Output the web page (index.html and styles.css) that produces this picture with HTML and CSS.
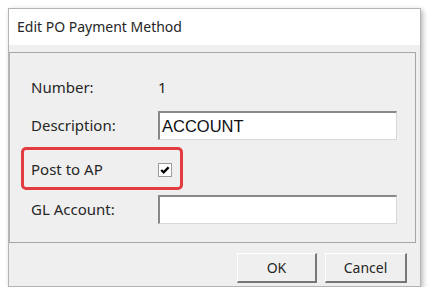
FILE: index.html
```html
<!DOCTYPE html>
<html lang="en">
<head>
  <meta charset="UTF-8">
  <title>Edit PO Payment Method</title>
  <link rel="stylesheet" href="styles.css">
</head>
<body>
  <div class="dialog">
    <div class="titlebar">Edit PO Payment Method</div>
    <div class="body">
      <div class="panel">
        <div class="row row-number">
          <span class="label">Number:</span>
          <span class="value">1</span>
        </div>
        <div class="row row-desc">
          <span class="label">Description:</span>
          <div class="textbox">ACCOUNT</div>
        </div>
        <div class="row row-post highlight">
          <span class="label">Post to AP</span>
          <span class="checkbox">
            <svg width="12" height="12" viewBox="0 0 12 12"><path d="M2.2 6 L4.7 8.4 L9.6 3.2" fill="none" stroke="#000" stroke-width="2.4"/></svg>
          </span>
        </div>
        <div class="row row-gl">
          <span class="label">GL Account:</span>
          <div class="textbox"></div>
        </div>
      </div>
      <div class="buttons">
        <button class="btn btn-ok">OK</button>
        <button class="btn btn-cancel">Cancel</button>
      </div>
    </div>
  </div>
</body>
</html>
```

FILE: styles.css
```css
body { margin: 0; background: #fff; font-family: "Noto Sans", "Open Sans", Arial, sans-serif; color: #262626; }
.dialog { margin: 8px 0 0 8px; width: 413px; height: 279px; box-sizing: border-box; border: 1px solid #b4b4b4; box-shadow: 2px 2px 5px rgba(0,0,0,0.28); background: #f0eff0; display: flex; flex-direction: column; }
.titlebar { height: 36px; background: #fff; padding-left: 8px; font-size: 14px; line-height: 36px; }
.body { flex: 1; display: flex; flex-direction: column; }
.panel { margin: 7px 4px 0 0; height: 191px; box-sizing: border-box; border: 1px solid #a6a6a6; border-left-color: #b4b4b4; padding: 19px 0 0 21px; display: flex; flex-direction: column; }
.row { display: flex; align-items: center; height: 30px; font-size: 15px; }
.label { width: 127px; flex: none; }
.row-desc { margin-top: 8px; }
.row-post { margin-top: 7px; }
.row-gl { margin-top: 4px; }
.highlight { height: 43px; width: 162px; box-sizing: border-box; margin-left: -10px; padding-left: 7px; border: 3px solid #e23b40; border-radius: 5px; }
.textbox { width: 239px; height: 29px; box-sizing: border-box; background: #fff; border-top: 2px solid #888; border-left: 2px solid #888; border-right: 1px solid #d8d8d8; border-bottom: 1px solid #d8d8d8; padding-left: 2px; font-family: "Liberation Sans", Arial, sans-serif; font-size: 16.5px; color: #111; line-height: 26px; }
.checkbox { width: 14px; height: 14px; margin: 2px 0 0 0; box-sizing: border-box; border: 1px solid #9a9a9a; background: #fff; display: flex; align-items: center; justify-content: center; }
.buttons { display: flex; justify-content: flex-end; gap: 8px; margin: 10px 13px 0 0; }
.btn { height: 30px; box-sizing: border-box; background: #f0eff0; font-family: inherit; font-size: 14px; color: #262626; border-top: 1px solid #fff; border-left: 1px solid #fff; border-right: 2px solid #777; border-bottom: 2px solid #777; padding: 0; }
.btn-ok { width: 80px; }
.btn-cancel { width: 82px; }
```
